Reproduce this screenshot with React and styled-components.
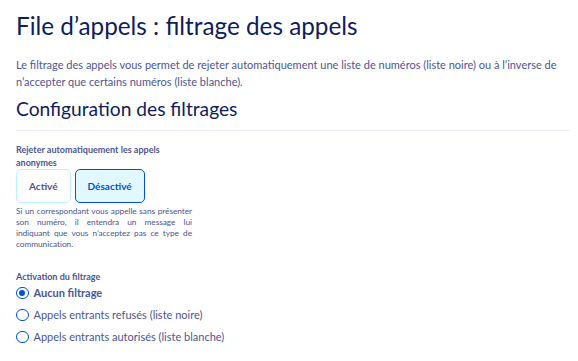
import React, { useState } from "react";
import styled, { createGlobalStyle } from "styled-components";

const Global = createGlobalStyle`
  html, body { margin: 0; padding: 0; background: #fff; }
  body { font-family: "Lato", "Noto Sans", sans-serif; }
  * { box-sizing: border-box; }
`;

const Page = styled.div`
  padding: 8px 16px 0 16px;
  width: 578px;
`;

const Title = styled.h1`
  margin: 0;
  font-size: 24.3px;
  line-height: 36px;
  font-weight: 400;
  color: #0e1d5c;
`;

const Intro = styled.p`
  margin: 12px 0 0 0;
  font-size: 11px;
  line-height: 17px;
  color: #4d5592;
`;

const SectionTitle = styled.h2`
  margin: 4px 0 0 0;
  font-size: 19.2px;
  line-height: 30px;
  font-weight: 400;
  color: #0e1d5c;
  padding-bottom: 6px;
  border-bottom: 1px solid #eef0f6;
  margin-right: -8px;
`;

const Field = styled.div`
  width: ${(p) => p.$width || "auto"};
  margin-top: ${(p) => p.$top || 0}px;
`;

const Label = styled.div`
  font-size: 9px;
  line-height: 13px;
  font-weight: 700;
  color: #4d5592;
  width: 150px;
`;

const Toggle = styled.div`
  display: flex;
  gap: 4px;
  margin-top: 0;
`;

const ToggleButton = styled.button`
  font-family: inherit;
  margin: 0;
  height: 34px;
  padding: 0 12px;
  border-radius: 5px;
  font-size: 10px;
  font-weight: 700;
  cursor: pointer;
  border: 1px solid ${(p) => (p.$active ? "#0050d7" : "#bef1ff")};
  background: ${(p) => (p.$active ? "#e2f8ff" : "#ffffff")};
  color: ${(p) => (p.$active ? "#0050d7" : "#4d5592")};
`;

const Help = styled.p`
  margin: 3px 0 0 0;
  font-size: 8.3px;
  letter-spacing: -0.05px;
  word-spacing: 0.3px;
  line-height: 11px;
  color: #4d5592;
  text-align: justify;
`;

const RadioList = styled.div`
  display: flex;
  flex-direction: column;
  gap: 6px;
  margin-top: 2px;
`;

const RadioRow = styled.label`
  display: flex;
  align-items: center;
  gap: 5px;
  font-size: 11px;
  line-height: 16px;
  color: #4d5592;
  font-weight: ${(p) => (p.$checked ? 700 : 400)};
  cursor: pointer;
`;

const RadioDot = styled.span`
  width: 12.5px;
  height: 12.5px;
  border-radius: 50%;
  border: 1.5px solid #0050d7;
  display: inline-flex;
  align-items: center;
  justify-content: center;
  flex: none;
  &::after {
    content: "";
    width: 6px;
    height: 6px;
    border-radius: 50%;
    background: ${(p) => (p.$checked ? "#0050d7" : "transparent")};
  }
`;

const options = [
  "Aucun filtrage",
  "Appels entrants refusés (liste noire)",
  "Appels entrants autorisés (liste blanche)",
];

export default function App() {
  const [anon, setAnon] = useState(false);
  const [filter, setFilter] = useState(0);
  return (
    <Page>
      <Global />
      <Title>File d’appels : filtrage des appels</Title>
      <Intro>
        Le filtrage des appels vous permet de rejeter automatiquement une liste de numéros (liste noire) ou à l’inverse de
        n’accepter que certains numéros (liste blanche).
      </Intro>
      <SectionTitle>Configuration des filtrages</SectionTitle>
      <Field $top={12} $width="176px">
        <Label>Rejeter automatiquement les appels anonymes</Label>
        <Toggle>
          <ToggleButton $active={anon} onClick={() => setAnon(true)}>Activé</ToggleButton>
          <ToggleButton $active={!anon} onClick={() => setAnon(false)}>Désactivé</ToggleButton>
        </Toggle>
        <Help>
          Si un correspondant vous appelle sans présenter son numéro, il entendra un message lui indiquant que vous
          n’acceptez pas ce type de communication.
        </Help>
      </Field>
      <Field $top={20}>
        <Label>Activation du filtrage</Label>
        <RadioList>
          {options.map((o, i) => (
            <RadioRow key={o} $checked={filter === i} onClick={() => setFilter(i)}>
              <RadioDot $checked={filter === i} />
              {o}
            </RadioRow>
          ))}
        </RadioList>
      </Field>
    </Page>
  );
}
